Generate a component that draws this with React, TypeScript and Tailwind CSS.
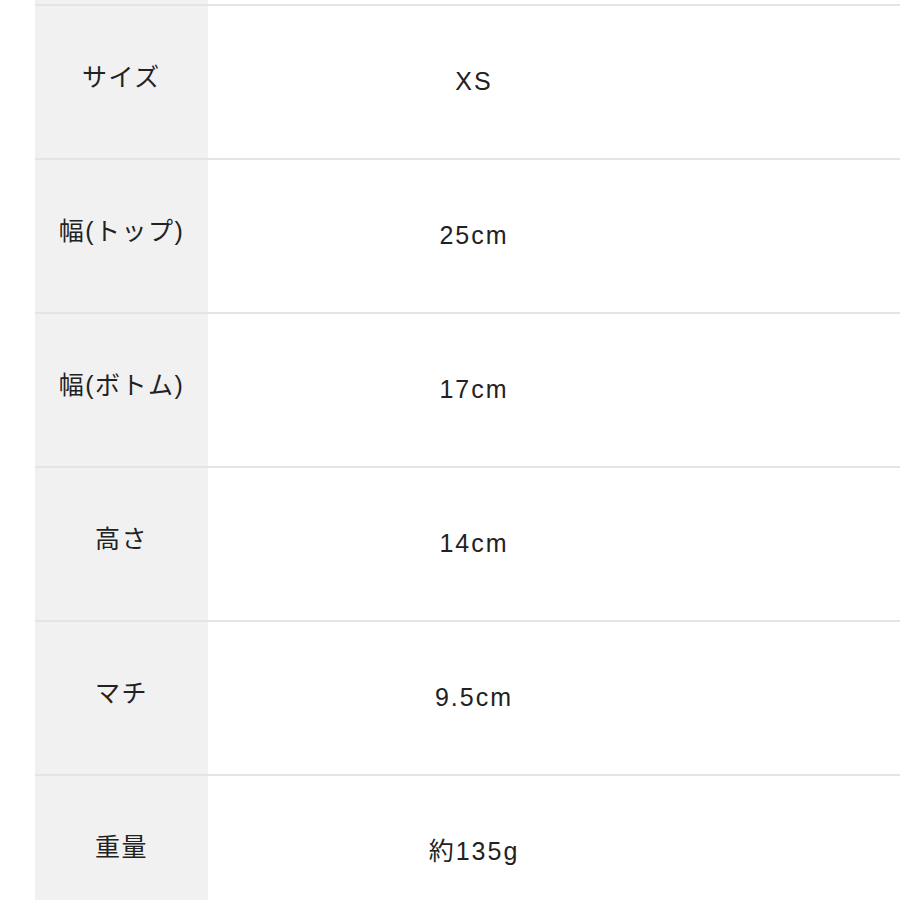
import React from 'react';

const rows = [
  { label: 'サイズ', value: 'XS' },
  { label: '幅(トップ)', value: '25cm' },
  { label: '幅(ボトム)', value: '17cm' },
  { label: '高さ', value: '14cm' },
  { label: 'マチ', value: '9.5cm' },
  { label: '重量', value: '約135g' },
];

export default function App() {
  return (
    <div
      className="h-[900px] w-[900px] overflow-hidden bg-white pl-[35px] text-[#222] text-[25px]"
      style={{ fontFamily: '"Liberation Sans", "Noto Sans CJK JP", sans-serif' }}
    >
      {/* tail of the row above, cut off by the top edge */}
      <div className="flex h-[4px]">
        <div className="w-[173px] bg-[#f1f1f1]" />
        <div className="flex-1" />
      </div>
      {rows.map((row) => (
        <div key={row.label} className="flex border-t-2 border-[#e4e4e4]">
          <div className="flex h-[152px] w-[173px] shrink-0 items-center justify-center bg-[#f1f1f1] pb-[9px] tracking-[1.5px]">
            {row.label}
          </div>
          <div className="flex h-[152px] flex-1 items-center justify-center pr-[160px] tracking-[2px]">
            {row.value}
          </div>
        </div>
      ))}
    </div>
  );
}
